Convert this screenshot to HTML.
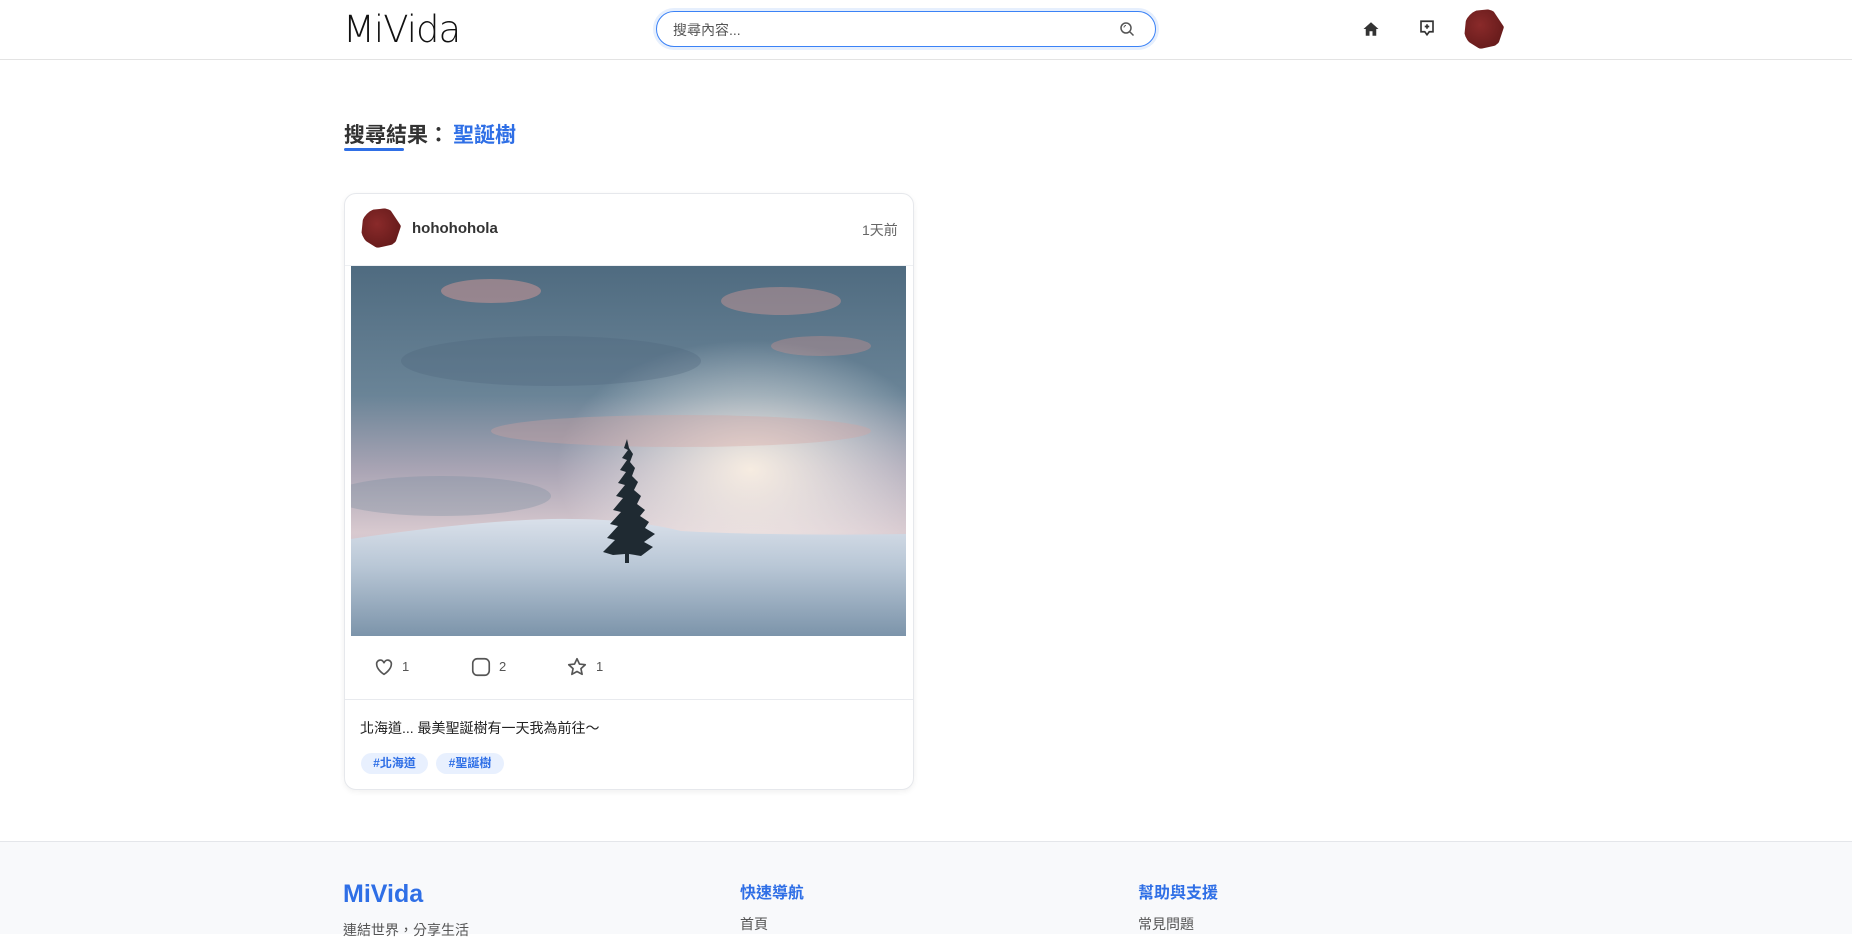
<!DOCTYPE html>
<html><head><meta charset="utf-8">
<style>
*{box-sizing:border-box;margin:0;padding:0}
body{width:1852px;height:934px;overflow:hidden;background:#fff;font-family:"Liberation Sans","Noto Sans CJK TC",sans-serif;position:relative;color:#222}
.abs{position:absolute}
header{position:absolute;left:0;top:0;width:1852px;height:60px;border-bottom:1px solid #e3e3e3;background:#fff}
.logo{left:343px;top:8px;font-size:37px;color:#111;letter-spacing:-1px;font-family:"DejaVu Sans","Liberation Sans",sans-serif;font-weight:200}
.search{left:656px;top:11px;width:500px;height:36px;border:1.5px solid #3b82f6;border-radius:18px;box-shadow:0 0 0 3px #e6effd;background:#fff}
.search span{position:absolute;left:16px;top:8px;font-size:14px;color:#555}
.av{border-radius:50%;background:radial-gradient(circle at 40% 40%,#8a2a2a,#5a1616);clip-path:polygon(20% 5%,70% 0,100% 45%,85% 90%,40% 100%,0 75%,5% 25%)}
.card{left:344px;top:193px;width:570px;height:597px;border:1px solid #e6e8ec;border-radius:12px;box-shadow:0 2px 6px rgba(0,0,0,.06);background:#fff}
.tag{position:absolute;top:753px;height:21px;border-radius:11px;background:#e8f0fe;color:#2f6fe6;font-size:12px;font-weight:bold;line-height:21px;text-align:center}
footer{position:absolute;left:0;top:841px;width:1852px;height:93px;background:#f8f9fb;border-top:1px solid #e4e6ea}
.cnt{font-size:13px;color:#555}
</style></head><body>
<header>
<div class="abs logo">MiVida</div>
<div class="abs search"><span>搜尋內容...</span>
<svg class="abs" style="left:462px;top:9px" width="16" height="16" viewBox="0 0 16 16" fill="none" stroke="#555" stroke-width="1.5"><circle cx="7" cy="7" r="5"/><path d="M11 11l3.5 3.5"/><path d="M5 6.5a2 2 0 0 1 2-2" stroke-width="1"/></svg></div>
<svg class="abs" style="left:1362px;top:20px" width="18" height="18" viewBox="0 0 24 24"><path d="M12 3L2 12h3v9h5v-6h4v6h5v-9h3z" fill="#333"/></svg>
<svg class="abs" style="left:1418px;top:19px" width="18" height="18" viewBox="0 0 24 24" fill="none" stroke="#333" stroke-width="2.2"><path d="M4 3h16v14h-5l-3 4-3-4H4z"/><path d="M12 7v6M9 10h6"/></svg>
<div class="abs av" style="left:1464px;top:9px;width:40px;height:40px"></div>
</header>
<div class="abs" style="left:344px;top:119px;font-size:21px;font-weight:bold;color:#333">搜尋結果：<span style="color:#2f6fe6;margin-left:4px">聖誕樹</span></div>
<div class="abs" style="left:344px;top:148px;width:60px;height:3px;background:#2f6fe6;border-radius:2px"></div>
<div class="abs card"></div>
<div class="abs av" style="left:361px;top:208px;width:40px;height:40px"></div>
<div class="abs" style="left:412px;top:220px;font-size:15px;font-weight:bold;color:#333">hohohohola</div>
<div class="abs" style="left:862px;top:220px;font-size:14px;color:#666">1天前</div>
<div class="abs" style="left:345px;top:265px;width:568px;height:1px;background:#eef0f3"></div>
<svg class="abs" style="left:351px;top:266px" width="555" height="370" viewBox="0 0 555 370" preserveAspectRatio="none">
<defs>
<linearGradient id="sky" x1="0" y1="0" x2="0" y2="1"><stop offset="0" stop-color="#4f6b80"/><stop offset=".35" stop-color="#6a8497"/><stop offset=".55" stop-color="#a9a4b4"/><stop offset=".72" stop-color="#d8c9cf"/><stop offset="1" stop-color="#b9b6c6"/></linearGradient>
<linearGradient id="snow" x1="0" y1="0" x2="0" y2="1"><stop offset="0" stop-color="#d9e0ea"/><stop offset=".4" stop-color="#b9c7d6"/><stop offset="1" stop-color="#7c94aa"/></linearGradient>
<radialGradient id="glow" cx=".72" cy=".55" r=".35"><stop offset="0" stop-color="#fff4e6" stop-opacity=".9"/><stop offset="1" stop-color="#fff" stop-opacity="0"/></radialGradient>
</defs>
<rect width="555" height="370" fill="url(#sky)"/>
<rect width="555" height="370" fill="url(#glow)"/>
<ellipse cx="140" cy="25" rx="50" ry="12" fill="#d79a98" opacity=".5"/>
<ellipse cx="430" cy="35" rx="60" ry="14" fill="#d09896" opacity=".45"/>
<ellipse cx="470" cy="80" rx="50" ry="10" fill="#c8908f" opacity=".4"/>
<ellipse cx="330" cy="165" rx="190" ry="16" fill="#d7a2a0" opacity=".35"/>
<ellipse cx="200" cy="95" rx="150" ry="25" fill="#4b6579" opacity=".3"/>
<ellipse cx="90" cy="230" rx="110" ry="20" fill="#7c8ea0" opacity=".35"/>
<path d="M0 273 Q120 255 200 253 Q280 252 330 265 Q420 270 555 268 L555 370 L0 370Z" fill="url(#snow)"/>
<path d="M276 173 L273 182 L277 184 L271 192 L276 194 L269 204 L275 206 L267 217 L274 219 L265 230 L272 232 L262 244 L270 246 L259 258 L267 260 L256 272 L264 274 L252 286 L262 289 L274 288 L274 297 L278 297 L278 288 L290 290 L302 281 L293 276 L304 268 L294 262 L298 256 L289 250 L294 244 L286 238 L290 230 L283 224 L287 216 L281 210 L284 202 L279 196 L282 188 L278 182Z" fill="#1f2a32"/>
</svg>
<svg class="abs" style="left:373px;top:656px" width="22" height="22" viewBox="0 0 24 24" fill="none" stroke="#555" stroke-width="1.8"><path d="M12 20s-8-5-8-11a4 4 0 0 1 8-1 4 4 0 0 1 8 1c0 6-8 11-8 11z"/></svg>
<div class="abs cnt" style="left:402px;top:659px">1</div>
<svg class="abs" style="left:470px;top:656px" width="22" height="22" viewBox="0 0 24 24" fill="none" stroke="#555" stroke-width="1.8"><rect x="3" y="3" width="18" height="18" rx="5"/></svg>
<div class="abs cnt" style="left:499px;top:659px">2</div>
<svg class="abs" style="left:566px;top:656px" width="22" height="22" viewBox="0 0 24 24" fill="none" stroke="#555" stroke-width="1.8" stroke-linejoin="round"><path d="M12 3l2.7 5.8 6.3.7-4.7 4.3 1.3 6.2L12 16.9 6.4 20l1.3-6.2L3 9.5l6.3-.7z"/></svg>
<div class="abs cnt" style="left:596px;top:659px">1</div>
<div class="abs" style="left:345px;top:699px;width:568px;height:1px;background:#e8eaee"></div>
<div class="abs" style="left:360px;top:718px;font-size:14px;color:#222">北海道... 最美聖誕樹有一天我為前往～</div>
<div class="tag" style="left:361px;width:67px">#北海道</div>
<div class="tag" style="left:436px;width:68px">#聖誕樹</div>
<footer>
<div class="abs" style="left:343px;top:38px;font-size:25px;font-weight:bold;color:#2f6fe6">MiVida</div>
<div class="abs" style="left:343px;top:78px;font-size:14px;color:#555">連結世界，分享生活</div>
<div class="abs" style="left:740px;top:37px;font-size:16px;font-weight:bold;color:#2f6fe6">快速導航</div>
<div class="abs" style="left:740px;top:72px;font-size:14px;color:#555">首頁</div>
<div class="abs" style="left:1138px;top:37px;font-size:16px;font-weight:bold;color:#2f6fe6">幫助與支援</div>
<div class="abs" style="left:1138px;top:72px;font-size:14px;color:#555">常見問題</div>
</footer>
</body></html>
